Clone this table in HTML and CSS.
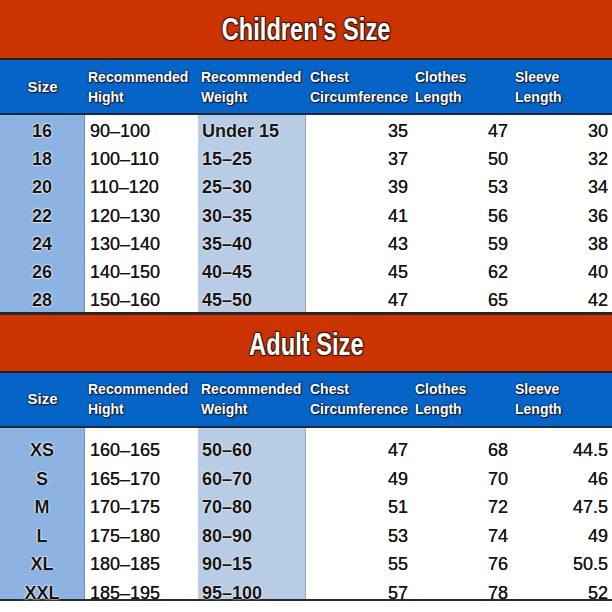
FILE: index.html
```html
<!DOCTYPE html>
<html lang="en">
<head>
<meta charset="utf-8">
<title>Size Chart</title>
<link rel="stylesheet" href="styles.css">
</head>
<body>
<div class="sheet">
  <section class="chart chart--kids">
    <h2 class="chart__title"><span>Children's Size</span></h2>
    <div class="grid">
      <div class="hd hd--size">Size</div>
      <div class="hd hd--h">Recommended<br>Hight</div>
      <div class="hd hd--w">Recommended<br>Weight</div>
      <div class="hd hd--n">Chest<br>Circumference</div>
      <div class="hd hd--n2">Clothes<br>Length</div>
      <div class="hd hd--n2">Sleeve<br>Length</div>

      <div class="c c--size">16</div><div class="c c--h">90–100</div><div class="c c--w">Under 15</div><div class="c c--n">35</div><div class="c c--n">47</div><div class="c c--n">30</div>
      <div class="c c--size">18</div><div class="c c--h">100–110</div><div class="c c--w">15–25</div><div class="c c--n">37</div><div class="c c--n">50</div><div class="c c--n">32</div>
      <div class="c c--size">20</div><div class="c c--h">110–120</div><div class="c c--w">25–30</div><div class="c c--n">39</div><div class="c c--n">53</div><div class="c c--n">34</div>
      <div class="c c--size">22</div><div class="c c--h">120–130</div><div class="c c--w">30–35</div><div class="c c--n">41</div><div class="c c--n">56</div><div class="c c--n">36</div>
      <div class="c c--size">24</div><div class="c c--h">130–140</div><div class="c c--w">35–40</div><div class="c c--n">43</div><div class="c c--n">59</div><div class="c c--n">38</div>
      <div class="c c--size">26</div><div class="c c--h">140–150</div><div class="c c--w">40–45</div><div class="c c--n">45</div><div class="c c--n">62</div><div class="c c--n">40</div>
      <div class="c c--size">28</div><div class="c c--h">150–160</div><div class="c c--w">45–50</div><div class="c c--n">47</div><div class="c c--n">65</div><div class="c c--n">42</div>
    </div>
  </section>

  <section class="chart chart--adult">
    <h2 class="chart__title"><span>Adult Size</span></h2>
    <div class="grid">
      <div class="hd hd--size">Size</div>
      <div class="hd hd--h">Recommended<br>Hight</div>
      <div class="hd hd--w">Recommended<br>Weight</div>
      <div class="hd hd--n">Chest<br>Circumference</div>
      <div class="hd hd--n2">Clothes<br>Length</div>
      <div class="hd hd--n2">Sleeve<br>Length</div>

      <div class="c c--size">XS</div><div class="c c--h">160–165</div><div class="c c--w">50–60</div><div class="c c--n">47</div><div class="c c--n">68</div><div class="c c--n">44.5</div>
      <div class="c c--size">S</div><div class="c c--h">165–170</div><div class="c c--w">60–70</div><div class="c c--n">49</div><div class="c c--n">70</div><div class="c c--n">46</div>
      <div class="c c--size">M</div><div class="c c--h">170–175</div><div class="c c--w">70–80</div><div class="c c--n">51</div><div class="c c--n">72</div><div class="c c--n">47.5</div>
      <div class="c c--size">L</div><div class="c c--h">175–180</div><div class="c c--w">80–90</div><div class="c c--n">53</div><div class="c c--n">74</div><div class="c c--n">49</div>
      <div class="c c--size">XL</div><div class="c c--h">180–185</div><div class="c c--w">90–15</div><div class="c c--n">55</div><div class="c c--n">76</div><div class="c c--n">50.5</div>
      <div class="c c--size">XXL</div><div class="c c--h">185–195</div><div class="c c--w">95–100</div><div class="c c--n">57</div><div class="c c--n">78</div><div class="c c--n">52</div>
    </div>
  </section>
</div>
</body>
</html>
```

FILE: styles.css
```css
html, body {
  margin: 0;
  padding: 0;
  background: #ffffff;
}

body {
  font-family: "Liberation Sans", Arial, sans-serif;
  color: #141414;
}

.sheet {
  width: 612px;
  display: flex;
  flex-direction: column;
}

.chart__title {
  margin: 0;
  height: 58px;
  background: #cb3300;
  border-bottom: 2px solid #2c1c16;
  display: flex;
  align-items: center;
  justify-content: center;
  color: #ffffff;
  font-size: 32px;
  font-weight: bold;
  line-height: 1;
}

.chart__title span {
  display: inline-block;
  transform: scaleX(0.74);
  text-shadow:
    -1px -1px 0 #3a1204,
     1px -1px 0 #3a1204,
    -1px  1px 0 #3a1204,
     1px  1px 0 #3a1204,
     0 0 3px #3a1204;
}

.chart--adult .chart__title {
  padding-top: 2px;
  box-sizing: border-box;
}

.grid {
  display: grid;
  grid-template-columns: 85px 113px 108px 106px 100px 100px;
}

.chart--kids .grid {
  grid-template-rows: 55px repeat(7, 28.14px);
  border-bottom: 3px solid #2a2624;
}

.chart--adult .grid {
  grid-template-rows: 55px repeat(6, 28.5px);
  border-bottom: 2px solid #2a2a2a;
}

.hd {
  background: #0664c6;
  border-bottom: 2px solid #1a2a3e;
  color: #ffffff;
  font-weight: bold;
  font-size: 14px;
  line-height: 20px;
  display: flex;
  align-items: center;
  white-space: nowrap;
  text-shadow:
    0 0 2px #0a1733,
    1px 1px 1px #0a1733,
    0 0 1px #0a1733;
}

.hd--size {
  justify-content: center;
  padding-left: 0;
  font-size: 15px;
}

.hd--h,
.hd--w,
.hd--n2 {
  padding-left: 3px;
}

.hd--n {
  padding-left: 4px;
}

.c {
  font-size: 18px;
  line-height: 18px;
  display: flex;
  align-items: flex-end;
  padding-bottom: 3px;
  white-space: nowrap;
  box-sizing: border-box;
  color: #141414;
  text-shadow: 0 0 0.6px #141414;
}

.chart--adult .c {
  padding-bottom: 0;
  line-height: 12px;
}

.c--size {
  background: #8cb3e2;
  border-right: 1px solid #6f93bf;
  justify-content: center;
  font-weight: bold;
  text-shadow:
    0 0 2px #ffffff,
    0 0 2px #ffffff,
    0 0 1px #ffffff;
}

.c--h {
  background: #ffffff;
  padding-left: 5px;
}

.c--w {
  background: #b8cce5;
  border-right: 1px solid #98aac0;
  padding-left: 4px;
  font-weight: bold;
  text-shadow:
    0 0 2px #ffffff,
    0 0 1px #ffffff;
}

.c--n {
  background: #ffffff;
  justify-content: flex-end;
  padding-right: 4px;
}
```
